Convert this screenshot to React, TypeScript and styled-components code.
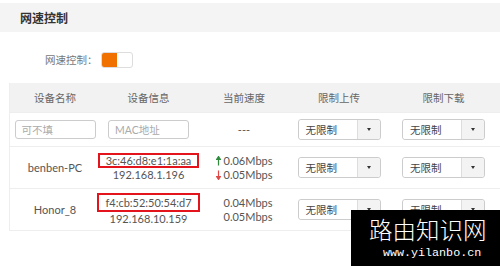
import React from "react";
import styled, {createGlobalStyle} from "styled-components";

const GlobalStyle = createGlobalStyle`
  body {
    margin: 0;
    background: #fff;
    font-family: Lato, "Noto Sans CJK SC", sans-serif;
    color: #555;
  }
`;

const Page = styled.div`
  position: relative;
  width: 500px;
  height: 266px;
  overflow: hidden;
`;

const TitleBar = styled.div`
  margin-top: 3px;
  height: 29px;
  background: #f4f4f4;
  padding-left: 20px;
  display: flex;
  align-items: center;
  font-family: "Noto Sans CJK SC", sans-serif;
  font-weight: 700;
  font-size: 12px;
  color: #333;
`;

const SwitchRow = styled.div`
  margin: 20px 0 0 45px;
  height: 15px;
  display: flex;
  align-items: center;
  gap: 3px;
  font-size: 10.5px;
  color: #777;
`;

const Toggle = styled.div`
  width: 30px;
  height: 14px;
  border: 1px solid #ddd;
  border-radius: 3px;
  display: flex;
  overflow: hidden;
  &::before {
    content: "";
    width: 15px;
    background: #f07000;
  }
`;

const Table = styled.div`
  margin: 16px 0 0 9px;
  border-left: 1px solid #eee;
  border-bottom: 1px solid #eee;
`;

const Row = styled.div<{ $h: number; $head?: boolean }>`
  display: grid;
  grid-template-columns: 90px 97px 94px 96px 1fr;
  height: ${(p) => p.$h}px;
  align-items: center;
  background: ${(p) => (p.$head ? "#f2f2f2" : "#fff")};
  border-top: ${(p) => (p.$head ? "none" : "1px solid #eee")};
  box-sizing: border-box;
`;

const HeadCell = styled.div`
  text-align: center;
  font-size: 10.5px;
  color: #666;
`;

const Cell = styled.div`
  display: flex;
  flex-direction: column;
  align-items: center;
  font-size: 11px;
  line-height: 14px;
  color: #555;
`;

const Input = styled.div`
  width: 81px;
  height: 19px;
  border: 1px solid #ccc;
  border-radius: 3px;
  box-sizing: border-box;
  padding-left: 6px;
  display: flex;
  align-items: center;
  font-size: 10.5px;
  color: #aaa;
`;

const Select = styled.div`
  width: 83px;
  height: 21px;
  border: 1px solid #ccc;
  border-radius: 3px;
  box-sizing: border-box;
  display: flex;
  font-size: 10.5px;
  color: #444;
`;

const SelectText = styled.div`
  flex: 1;
  display: flex;
  align-items: center;
  padding-left: 7px;
  background: #fff;
  border-radius: 3px 0 0 3px;
`;

const SelectBtn = styled.div`
  width: 22px;
  border-left: 1px solid #ddd;
  background: #f3f3f3;
  display: flex;
  align-items: center;
  justify-content: center;
  border-radius: 0 3px 3px 0;
  &::after {
    content: "";
    border-left: 2px solid transparent;
    border-right: 2px solid transparent;
    border-top: 3px solid #333;
  }
`;

const MacBox = styled.div<{ $pad: number }>`
  border: 2px solid #e3141c;
  padding: ${(p) => p.$pad}px 6px;
  line-height: 11px;
`;

const SpeedLine = styled.div`
  display: flex;
  align-items: center;
`;

const ArrowSlot = styled.span`
  width: 8px;
  display: inline-flex;
`;

const Watermark = styled.div`
  position: absolute;
  right: 0;
  bottom: 0;
  width: 149px;
  height: 56px;
  background: #000;
  color: #fff;
  display: flex;
  flex-direction: column;
`;

const MarkTitle = styled.div`
  margin: 6px 0 0 18px;
  font-family: "Noto Sans CJK SC", sans-serif;
  font-weight: 300;
  font-size: 23.5px;
  line-height: 26px;
  letter-spacing: 0;
`;

const MarkUrl = styled.div`
  margin: 4px 0 0 32px;
  font-family: "Liberation Mono", monospace;
  font-size: 11.7px;
  line-height: 14px;
`;

const Arrow = ({up}: { up: boolean }) => (
  <svg width="5" height="10" viewBox="0 0 5 10">
    {up ? (
      <path d="M2.5 0.5 L0.5 3.5 L4.5 3.5 Z M2.5 3 V9.5" stroke="#2e8b3a" fill="#2e8b3a" strokeWidth="1.2" />
    ) : (
      <path d="M2.5 9.5 L0.5 6.5 L4.5 6.5 Z M2.5 7 V0.5" stroke="#e04848" fill="#e04848" strokeWidth="1.2" />
    )}
  </svg>
);

const devices = [
  {name: "benben-PC", mac: "3c:46:d8:e1:1a:aa", ip: "192.168.1.196", up: "0.06Mbps", down: "0.05Mbps", arrows: true, pad: 0},
  {name: "Honor_8", mac: "f4:cb:52:50:54:d7", ip: "192.168.10.159", up: "0.04Mbps", down: "0.05Mbps", arrows: false, pad: 2},
];

const LimitSelect = () => (
  <Select>
    <SelectText>无限制</SelectText>
    <SelectBtn />
  </Select>
);

export default function App() {
  return (
    <Page>
      <GlobalStyle />
      <TitleBar>网速控制</TitleBar>
      <SwitchRow>
        网速控制：
        <Toggle />
      </SwitchRow>
      <Table>
        <Row $h={29} $head>
          <HeadCell>设备名称</HeadCell>
          <HeadCell>设备信息</HeadCell>
          <HeadCell>当前速度</HeadCell>
          <HeadCell>限制上传</HeadCell>
          <HeadCell>限制下载</HeadCell>
        </Row>
        <Row $h={34}>
          <Cell><Input>可不填</Input></Cell>
          <Cell><Input>MAC地址</Input></Cell>
          <Cell>---</Cell>
          <Cell><LimitSelect /></Cell>
          <Cell><LimitSelect /></Cell>
        </Row>
        {devices.map((d) => (
          <Row $h={42} key={d.name}>
            <Cell>{d.name}</Cell>
            <Cell>
              <MacBox $pad={d.pad}>{d.mac}</MacBox>
              <div>{d.ip}</div>
            </Cell>
            <Cell>
              <SpeedLine>
                <ArrowSlot>{d.arrows && <Arrow up />}</ArrowSlot>
                {d.up}
              </SpeedLine>
              <SpeedLine>
                <ArrowSlot>{d.arrows && <Arrow up={false} />}</ArrowSlot>
                {d.down}
              </SpeedLine>
            </Cell>
            <Cell><LimitSelect /></Cell>
            <Cell><LimitSelect /></Cell>
          </Row>
        ))}
      </Table>
      <Watermark>
        <MarkTitle>路由知识网</MarkTitle>
        <MarkUrl>www.yilanbo.cn</MarkUrl>
      </Watermark>
    </Page>
  );
}
